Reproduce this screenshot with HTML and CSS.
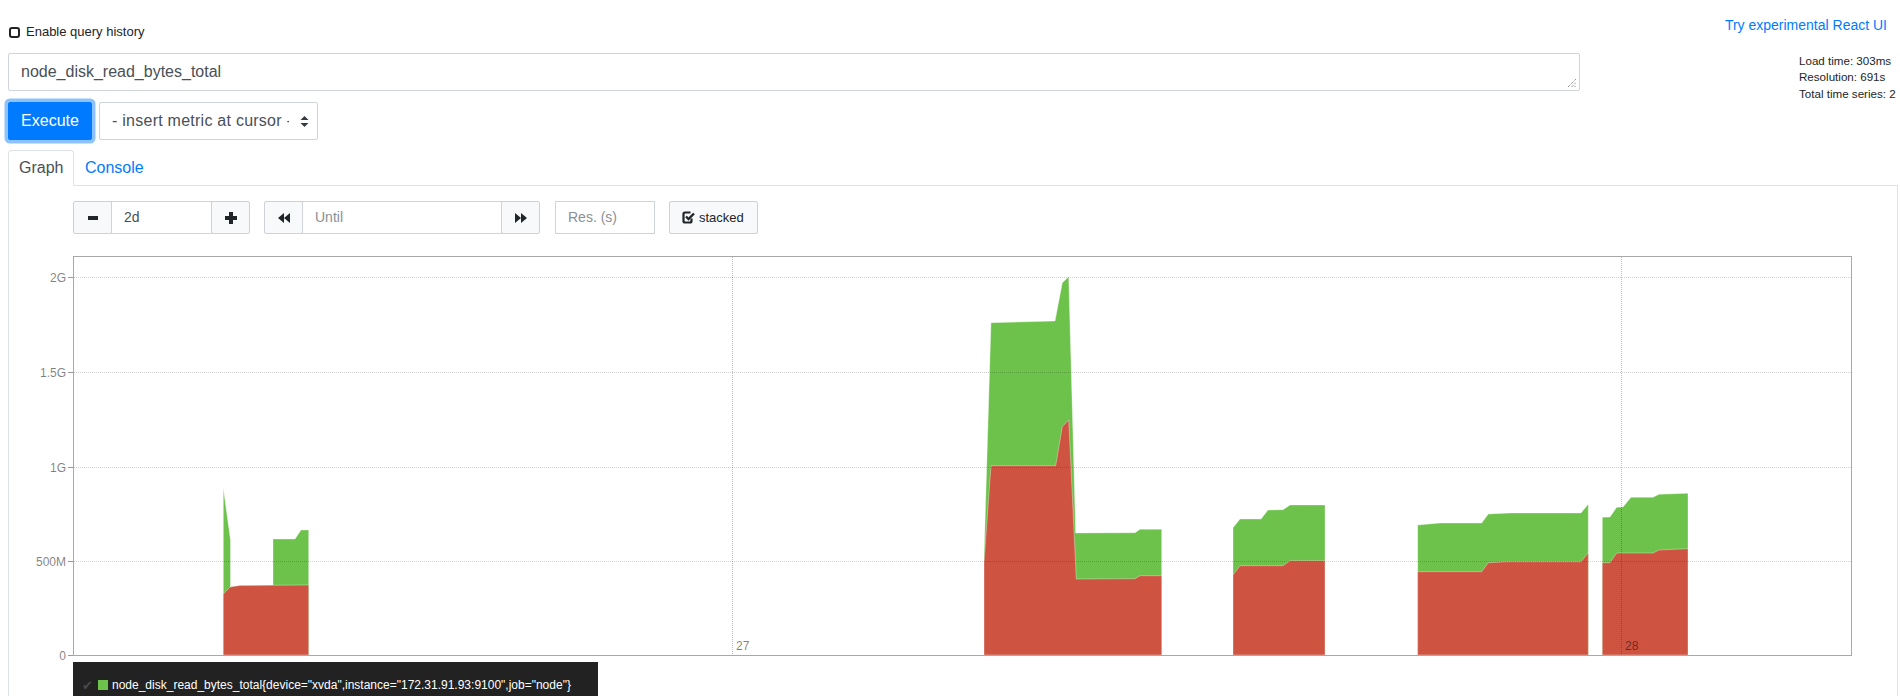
FILE: index.html
```html
<!DOCTYPE html>
<html>
<head>
<meta charset="utf-8">
<title>Prometheus Time Series Collection and Processing Server</title>
<link rel="stylesheet" href="styles.css">
</head>
<body>
<div class="page">
  <div class="topbar">
    <label class="history"><span class="cbox"></span><span>Enable query history</span></label>
    <a class="react-link" href="#">Try experimental React UI</a>
  </div>

  <div class="query-row">
    <div class="query-main">
      <div class="expr">node_disk_read_bytes_total<svg class="grip" width="10" height="10" viewBox="0 0 10 10"><path d="M1 9 L9 1 M4.5 9 L9 4.5 M7.5 9 L9 7.5" stroke="#666" stroke-width="1" stroke-dasharray="1 1"/></svg></div>
      <div class="exec-row">
        <button class="execute">Execute</button>
        <div class="metric-select"><span class="sel-text">- insert metric at cursor -</span><svg class="sel-arrows" width="9" height="13" viewBox="0 0 9 13"><path d="M4.5 1 L8.5 5 L0.5 5 Z M4.5 12 L8.5 8 L0.5 8 Z" fill="#343a40"/></svg></div>
      </div>
    </div>
    <div class="stats">
      <div>Load time: 303ms</div>
      <div>Resolution: 691s</div>
      <div>Total time series: 2</div>
    </div>
  </div>

  <div class="tabs">
    <div class="tab active">Graph</div>
    <div class="tab link">Console</div>
  </div>

  <div class="tab-content">
    <div class="controls">
      <div class="group">
        <div class="btn icon-btn"><svg width="10" height="4" viewBox="0 0 10 4"><rect width="10" height="4" fill="#212529"/></svg></div>
        <div class="field w-range">2d</div>
        <div class="btn icon-btn"><svg width="12" height="12" viewBox="0 0 12 12"><path d="M4 0 H8 V4 H12 V8 H8 V12 H4 V8 H0 V4 H4 Z" fill="#212529"/></svg></div>
      </div>
      <div class="group">
        <div class="btn icon-btn"><svg width="12" height="10" viewBox="0 0 12 10"><path d="M6 0 V10 L0 5 Z M12 0 V10 L6 5 Z" fill="#212529"/></svg></div>
        <div class="field placeholder w-until">Until</div>
        <div class="btn icon-btn"><svg width="12" height="10" viewBox="0 0 12 10"><path d="M0 0 V10 L6 5 Z M6 0 V10 L12 5 Z" fill="#212529"/></svg></div>
      </div>
      <div class="field placeholder w-res">Res. (s)</div>
      <div class="btn stacked"><svg width="13" height="13" viewBox="0 0 13 13"><path d="M9.5 7.5 V10 Q9.5 11.5 8 11.5 H3 Q1.5 11.5 1.5 10 V3 Q1.5 1.5 3 1.5 H8.5" fill="none" stroke="#212529" stroke-width="2.2"/><path d="M4 5.5 L6.5 8 L12 2.5" fill="none" stroke="#212529" stroke-width="2.4"/></svg><span>stacked</span></div>
    </div>

    <div class="graph">
      <svg class="chart" width="1888" height="416" viewBox="9 246 1888 416">
        <g class="areas">
          <path class="green" d="M223.3,655 L223.3,488 L230.5,540 L230.5,587 L240,585.5 L273,585 L273,539 L295,539 L301,530 L308.7,530 L308.7,655 Z"/>
          <path class="red" d="M223.3,655 L223.3,594 L230,587 L240,585.5 L308.7,585 L308.7,655 Z"/>
          <path class="green" d="M984,655 L984,557 L991,322.7 L1055,321 L1062.3,282.7 L1068.7,276.7 L1075.7,533 L1135,532.7 L1140,529.3 L1161.7,529.3 L1161.7,655 Z"/>
          <path class="red" d="M984,655 L984,563 L991,465.7 L1055.7,465.7 L1062.3,426.7 L1068.7,420 L1076.3,579 L1135,578.7 L1140,575.7 L1161.7,575.7 L1161.7,655 Z"/>
          <path class="green" d="M1233,655 L1233,527.7 L1240,519 L1261,519 L1268,510 L1283,509.7 L1290,505 L1325,505 L1325,655 Z"/>
          <path class="red" d="M1233,655 L1233,575 L1240,565.7 L1283,565.7 L1290,560.7 L1325,560.7 L1325,655 Z"/>
          <path class="green" d="M1417.7,655 L1417.7,525 L1440,523 L1481.7,523 L1488.3,514 L1510,513 L1581,513 L1588.3,504 L1588.3,655 Z"/>
          <path class="red" d="M1417.7,655 L1417.7,571.7 L1481.7,571.7 L1488.3,562.7 L1507,561.7 L1581,561.7 L1588.3,552.7 L1588.3,655 Z"/>
          <path class="green" d="M1602.3,655 L1602.3,517.3 L1610,517 L1616.7,507.3 L1623,507 L1631,497.3 L1653,497.3 L1659,494.3 L1688,493.3 L1688,655 Z"/>
          <path class="red" d="M1602.3,655 L1602.3,562.7 L1610,562.7 L1616.7,553 L1653,553 L1659,550 L1688,548.7 L1688,655 Z"/>
        </g>
        <g class="hgrid">
          <line x1="74" y1="277.5" x2="1851" y2="277.5"/>
          <line x1="74" y1="372.5" x2="1851" y2="372.5"/>
          <line x1="74" y1="467.5" x2="1851" y2="467.5"/>
          <line x1="74" y1="561.5" x2="1851" y2="561.5"/>
        </g>
        <g class="vgrid">
          <line x1="732.5" y1="257" x2="732.5" y2="655"/>
          <line x1="1621.5" y1="257" x2="1621.5" y2="655"/>
        </g>
        <g class="xlabels">
          <text x="736" y="650">27</text>
          <text x="1625" y="650">28</text>
        </g>
        <rect class="frame" x="73.5" y="256.5" width="1778" height="399"/>
        <g class="ticks">
          <line x1="68" y1="277.5" x2="73" y2="277.5"/>
          <line x1="68" y1="372.5" x2="73" y2="372.5"/>
          <line x1="68" y1="467.5" x2="73" y2="467.5"/>
          <line x1="68" y1="561.5" x2="73" y2="561.5"/>
          <line x1="68" y1="655.5" x2="73" y2="655.5"/>
        </g>
        <g class="ylabels">
          <text x="66" y="281.5">2G</text>
          <text x="66" y="376.5">1.5G</text>
          <text x="66" y="471.5">1G</text>
          <text x="66" y="565.5">500M</text>
          <text x="66" y="659.5">0</text>
        </g>
      </svg>
      <div class="legend">
        <div class="legend-line"><span class="action">✔</span><span class="swatch"></span><span class="label">node_disk_read_bytes_total{device="xvda",instance="172.31.91.93:9100",job="node"}</span></div>
      </div>
    </div>
  </div>
</div>
</body>
</html>
```

FILE: styles.css
```css
html, body {
  margin: 0;
  padding: 0;
  background: #fff;
  overflow: hidden;
}
body {
  font-family: "Liberation Sans", Arial, sans-serif;
  color: #212529;
  width: 1900px;
  height: 696px;
}
.page {
  padding: 0 2px 0 8px;
}

/* top bar */
.topbar {
  display: flex;
  justify-content: space-between;
  align-items: flex-start;
  height: 53px;
}
.history {
  display: flex;
  align-items: center;
  margin-top: 24px;
  font-size: 13px;
  line-height: 16px;
  color: #212529;
}
.cbox {
  width: 7px;
  height: 7px;
  border: 2px solid #222;
  border-radius: 3px;
  margin: 0 6px 0 1px;
  background: #fff;
}
.react-link {
  margin-top: 15px;
  margin-right: 11px;
  font-size: 14px;
  line-height: 20px;
  color: #007bff;
  text-decoration: none;
}

/* query row */
.query-row {
  display: flex;
  align-items: flex-start;
}
.query-main {
  width: 1572px;
  flex: none;
}
.expr {
  position: relative;
  box-sizing: border-box;
  height: 38px;
  border: 1px solid #ced4da;
  border-radius: 2px;
  padding: 6px 12px;
  font-size: 16px;
  line-height: 24px;
  color: #495057;
}
.grip {
  position: absolute;
  right: 2px;
  bottom: 2px;
}
.exec-row {
  display: flex;
  align-items: center;
  gap: 7px;
  margin-top: 11px;
}
.execute {
  box-sizing: border-box;
  width: 84px;
  height: 38px;
  border: 1px solid #007bff;
  border-radius: 2px;
  background: #007bff;
  color: #fff;
  font-family: "Liberation Sans", Arial, sans-serif;
  font-size: 16px;
  padding: 0;
  box-shadow: 0 0 0 3.5px rgba(0, 123, 255, 0.45);
}
.metric-select {
  box-sizing: border-box;
  width: 219px;
  height: 38px;
  border: 1px solid #ced4da;
  border-radius: 2px;
  display: flex;
  align-items: center;
  padding-left: 12px;
  font-size: 16px;
  color: #495057;
}
.sel-text {
  width: 177px;
  flex: none;
  overflow: hidden;
  white-space: nowrap;
  letter-spacing: 0.25px;
}
.sel-arrows {
  margin-left: 11px;
}
.stats {
  margin-left: auto;
  width: 99px;
  flex: none;
  font-size: 11.6px;
  line-height: 16.4px;
  white-space: nowrap;
  color: #212529;
}

/* tabs */
.tabs {
  display: flex;
  margin-top: 10px;
  border-bottom: 1px solid #dee2e6;
  height: 35px;
}
.tab {
  box-sizing: border-box;
  height: 36px;
  padding: 5px 10px 0;
  font-size: 16px;
  line-height: 24px;
  border: 1px solid transparent;
  border-radius: 4px 4px 0 0;
}
.tab.active {
  width: 66px;
  color: #495057;
  border-color: #dee2e6 #dee2e6 #fff;
  background: #fff;
}
.tab.link {
  color: #007bff;
}
.tab-content {
  border: 1px solid #dee2e6;
  border-top: none;
  height: 520px;
}

/* controls */
.controls {
  display: flex;
  align-items: center;
  gap: 14px;
  padding: 15px 0 0 64px;
}
.group {
  display: flex;
}
.group > * + * {
  margin-left: -1px;
}
.btn {
  box-sizing: border-box;
  height: 33px;
  border: 1px solid #ced2d6;
  background: #f8f9fa;
  border-radius: 2px;
  display: flex;
  align-items: center;
  justify-content: center;
}
.icon-btn {
  width: 39px;
}
.field {
  box-sizing: border-box;
  height: 33px;
  border: 1px solid #ced4da;
  padding: 0 12px;
  font-size: 14px;
  line-height: 31px;
  color: #495057;
  background: #fff;
}
.placeholder {
  color: #8a9096;
}
.w-range { width: 101px; }
.w-until { width: 200px; }
.w-res { width: 100px; margin-left: 1px; }
.stacked {
  width: 89px;
  justify-content: flex-start;
  padding-left: 12px;
  font-size: 13px;
  color: #212529;
  gap: 4px;
}

/* graph */
.graph {
  margin-top: 12px;
}
.chart {
  display: block;
}
.green {
  fill: #6cc24a;
  stroke: rgba(255, 255, 255, 0.35);
  stroke-width: 1;
}
.red {
  fill: #ce5341;
  stroke: rgba(255, 255, 255, 0.35);
  stroke-width: 1;
}
.hgrid line {
  stroke: rgba(0, 0, 0, 0.18);
  stroke-width: 1;
  stroke-dasharray: 1 1;
}
.vgrid line {
  stroke: rgba(0, 0, 0, 0.25);
  stroke-width: 1;
  stroke-dasharray: 1 1;
}
.frame {
  fill: none;
  stroke: #a9a9a9;
  stroke-width: 1;
}
.ticks line {
  stroke: #999;
  stroke-width: 1;
}
.ylabels text {
  font-family: "Liberation Sans", Arial, sans-serif;
  font-size: 12px;
  fill: rgba(0, 0, 0, 0.5);
  text-anchor: end;
}
.xlabels text {
  font-family: "Liberation Sans", Arial, sans-serif;
  font-size: 12px;
  fill: rgba(0, 0, 0, 0.5);
}
.legend {
  margin: 0 0 0 64px;
  width: 525px;
  background: #222;
  padding: 15px 0 8px 9px;
  box-sizing: border-box;
}
.legend-line {
  display: flex;
  align-items: center;
  height: 16px;
  font-size: 12px;
  color: #fff;
  white-space: nowrap;
}
.action {
  color: #4a4a4a;
  font-size: 13px;
  width: 16px;
}
.swatch {
  width: 10px;
  height: 10px;
  background: #6cc24a;
  margin-right: 4px;
}
```
